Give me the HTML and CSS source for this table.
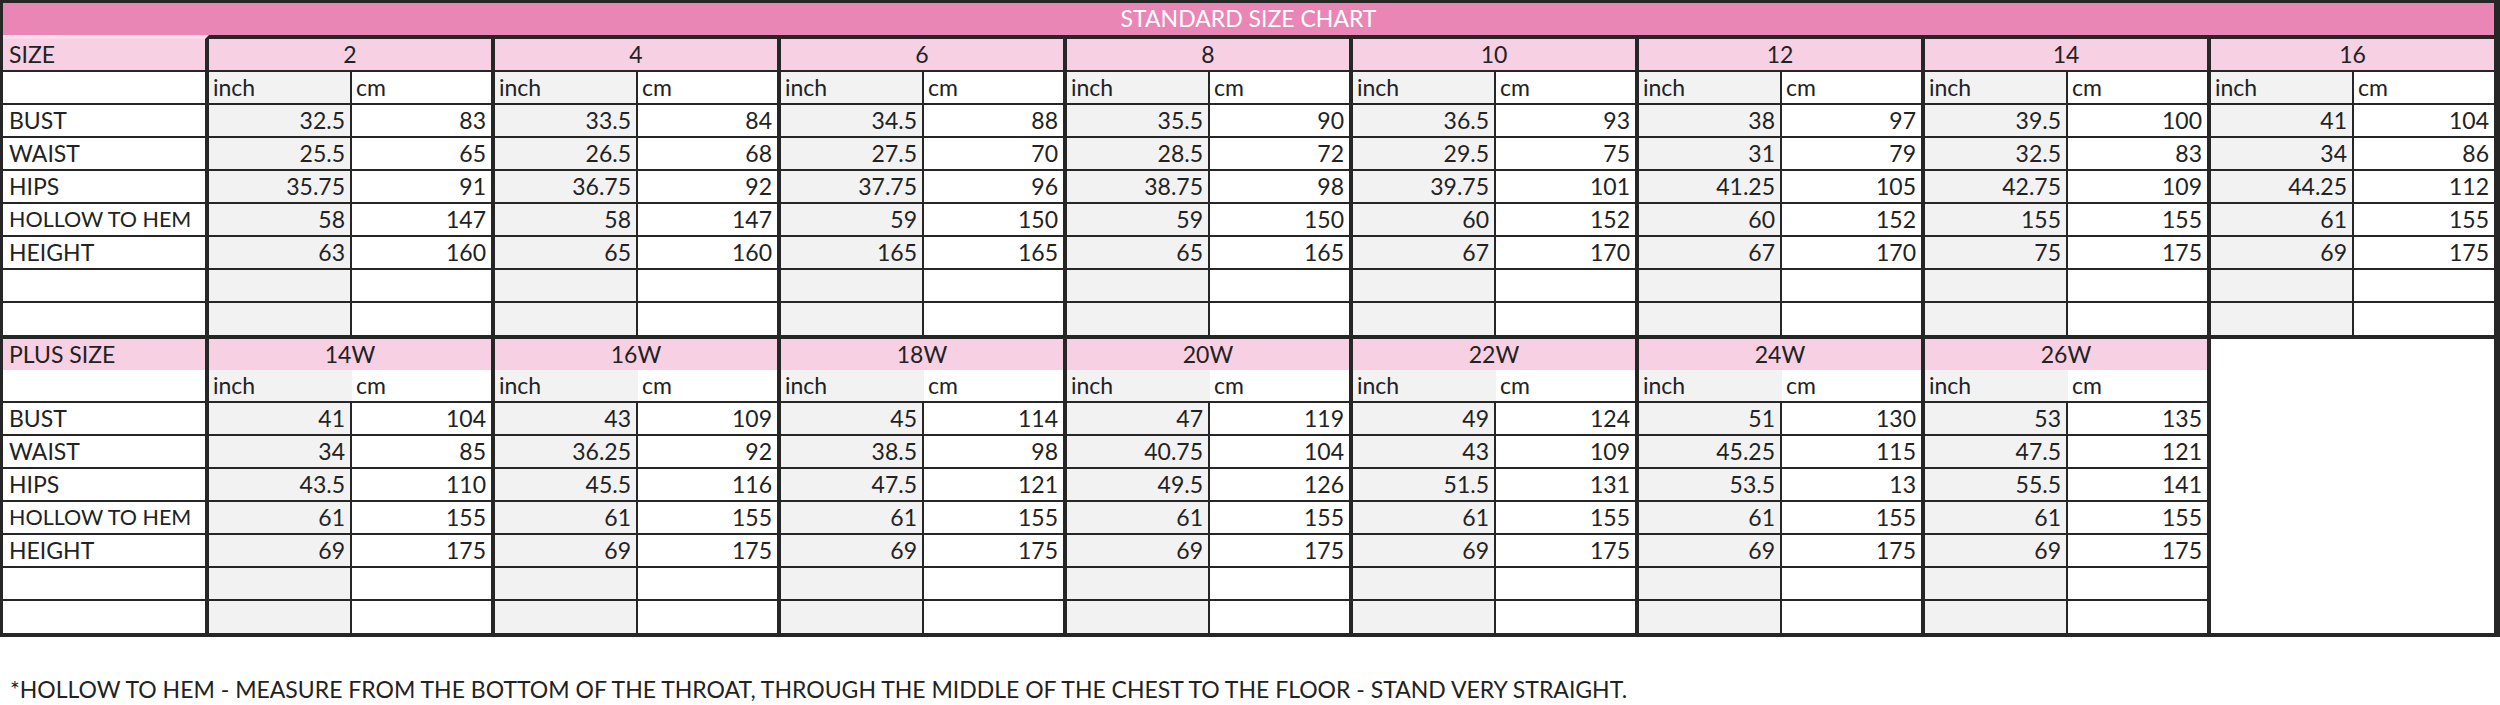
FILE: index.html
```html
<!DOCTYPE html>
<html lang="en">
<head>
<meta charset="utf-8">
<title>Standard Size Chart</title>
<link rel="stylesheet" href="styles.css">
</head>
<body>
<div class="chart">
  <div class="title">STANDARD SIZE CHART</div>
  <div class="grid upper">
    <div class="c lab lh">SIZE</div>
    <div class="c hd">2</div><div class="c hd">4</div><div class="c hd">6</div><div class="c hd">8</div><div class="c hd">10</div><div class="c hd">12</div><div class="c hd">14</div><div class="c hd end">16</div>

    <div class="c lab"></div>
    <div class="c in u">inch</div><div class="c cm u">cm</div>
    <div class="c in u">inch</div><div class="c cm u">cm</div>
    <div class="c in u">inch</div><div class="c cm u">cm</div>
    <div class="c in u">inch</div><div class="c cm u">cm</div>
    <div class="c in u">inch</div><div class="c cm u">cm</div>
    <div class="c in u">inch</div><div class="c cm u">cm</div>
    <div class="c in u">inch</div><div class="c cm u">cm</div>
    <div class="c in u">inch</div><div class="c cm u end">cm</div>

    <div class="c lab">BUST</div>
    <div class="c in">32.5</div><div class="c cm">83</div>
    <div class="c in">33.5</div><div class="c cm">84</div>
    <div class="c in">34.5</div><div class="c cm">88</div>
    <div class="c in">35.5</div><div class="c cm">90</div>
    <div class="c in">36.5</div><div class="c cm">93</div>
    <div class="c in">38</div><div class="c cm">97</div>
    <div class="c in">39.5</div><div class="c cm">100</div>
    <div class="c in">41</div><div class="c cm end">104</div>

    <div class="c lab">WAIST</div>
    <div class="c in">25.5</div><div class="c cm">65</div>
    <div class="c in">26.5</div><div class="c cm">68</div>
    <div class="c in">27.5</div><div class="c cm">70</div>
    <div class="c in">28.5</div><div class="c cm">72</div>
    <div class="c in">29.5</div><div class="c cm">75</div>
    <div class="c in">31</div><div class="c cm">79</div>
    <div class="c in">32.5</div><div class="c cm">83</div>
    <div class="c in">34</div><div class="c cm end">86</div>

    <div class="c lab">HIPS</div>
    <div class="c in">35.75</div><div class="c cm">91</div>
    <div class="c in">36.75</div><div class="c cm">92</div>
    <div class="c in">37.75</div><div class="c cm">96</div>
    <div class="c in">38.75</div><div class="c cm">98</div>
    <div class="c in">39.75</div><div class="c cm">101</div>
    <div class="c in">41.25</div><div class="c cm">105</div>
    <div class="c in">42.75</div><div class="c cm">109</div>
    <div class="c in">44.25</div><div class="c cm end">112</div>

    <div class="c lab small">HOLLOW TO HEM</div>
    <div class="c in">58</div><div class="c cm">147</div>
    <div class="c in">58</div><div class="c cm">147</div>
    <div class="c in">59</div><div class="c cm">150</div>
    <div class="c in">59</div><div class="c cm">150</div>
    <div class="c in">60</div><div class="c cm">152</div>
    <div class="c in">60</div><div class="c cm">152</div>
    <div class="c in">155</div><div class="c cm">155</div>
    <div class="c in">61</div><div class="c cm end">155</div>

    <div class="c lab">HEIGHT</div>
    <div class="c in">63</div><div class="c cm">160</div>
    <div class="c in">65</div><div class="c cm">160</div>
    <div class="c in">165</div><div class="c cm">165</div>
    <div class="c in">65</div><div class="c cm">165</div>
    <div class="c in">67</div><div class="c cm">170</div>
    <div class="c in">67</div><div class="c cm">170</div>
    <div class="c in">75</div><div class="c cm">175</div>
    <div class="c in">69</div><div class="c cm end">175</div>

    <div class="c lab"></div>
    <div class="c in"></div><div class="c cm"></div>
    <div class="c in"></div><div class="c cm"></div>
    <div class="c in"></div><div class="c cm"></div>
    <div class="c in"></div><div class="c cm"></div>
    <div class="c in"></div><div class="c cm"></div>
    <div class="c in"></div><div class="c cm"></div>
    <div class="c in"></div><div class="c cm"></div>
    <div class="c in"></div><div class="c cm end"></div>

    <div class="c lab nb"></div>
    <div class="c in nb"></div><div class="c cm nb"></div>
    <div class="c in nb"></div><div class="c cm nb"></div>
    <div class="c in nb"></div><div class="c cm nb"></div>
    <div class="c in nb"></div><div class="c cm nb"></div>
    <div class="c in nb"></div><div class="c cm nb"></div>
    <div class="c in nb"></div><div class="c cm nb"></div>
    <div class="c in nb"></div><div class="c cm nb"></div>
    <div class="c in nb"></div><div class="c cm nb end"></div>
  </div>

  <div class="grid lower">
    <div class="empty"></div>

    <div class="c lab lh2 nb">PLUS SIZE</div>
    <div class="c hd2 nb">14W</div><div class="c hd2 nb">16W</div><div class="c hd2 nb">18W</div><div class="c hd2 nb">20W</div><div class="c hd2 nb">22W</div><div class="c hd2 nb">24W</div><div class="c hd2 nb">26W</div>

    <div class="c lab"></div>
    <div class="c in u open">inch</div><div class="c cm u">cm</div>
    <div class="c in u open">inch</div><div class="c cm u">cm</div>
    <div class="c in u open">inch</div><div class="c cm u">cm</div>
    <div class="c in u open">inch</div><div class="c cm u">cm</div>
    <div class="c in u open">inch</div><div class="c cm u">cm</div>
    <div class="c in u open">inch</div><div class="c cm u">cm</div>
    <div class="c in u open">inch</div><div class="c cm u">cm</div>

    <div class="c lab">BUST</div>
    <div class="c in">41</div><div class="c cm">104</div>
    <div class="c in">43</div><div class="c cm">109</div>
    <div class="c in">45</div><div class="c cm">114</div>
    <div class="c in">47</div><div class="c cm">119</div>
    <div class="c in">49</div><div class="c cm">124</div>
    <div class="c in">51</div><div class="c cm">130</div>
    <div class="c in">53</div><div class="c cm">135</div>

    <div class="c lab">WAIST</div>
    <div class="c in">34</div><div class="c cm">85</div>
    <div class="c in">36.25</div><div class="c cm">92</div>
    <div class="c in">38.5</div><div class="c cm">98</div>
    <div class="c in">40.75</div><div class="c cm">104</div>
    <div class="c in">43</div><div class="c cm">109</div>
    <div class="c in">45.25</div><div class="c cm">115</div>
    <div class="c in">47.5</div><div class="c cm">121</div>

    <div class="c lab">HIPS</div>
    <div class="c in">43.5</div><div class="c cm">110</div>
    <div class="c in">45.5</div><div class="c cm">116</div>
    <div class="c in">47.5</div><div class="c cm">121</div>
    <div class="c in">49.5</div><div class="c cm">126</div>
    <div class="c in">51.5</div><div class="c cm">131</div>
    <div class="c in">53.5</div><div class="c cm">13</div>
    <div class="c in">55.5</div><div class="c cm">141</div>

    <div class="c lab small">HOLLOW TO HEM</div>
    <div class="c in">61</div><div class="c cm">155</div>
    <div class="c in">61</div><div class="c cm">155</div>
    <div class="c in">61</div><div class="c cm">155</div>
    <div class="c in">61</div><div class="c cm">155</div>
    <div class="c in">61</div><div class="c cm">155</div>
    <div class="c in">61</div><div class="c cm">155</div>
    <div class="c in">61</div><div class="c cm">155</div>

    <div class="c lab">HEIGHT</div>
    <div class="c in">69</div><div class="c cm">175</div>
    <div class="c in">69</div><div class="c cm">175</div>
    <div class="c in">69</div><div class="c cm">175</div>
    <div class="c in">69</div><div class="c cm">175</div>
    <div class="c in">69</div><div class="c cm">175</div>
    <div class="c in">69</div><div class="c cm">175</div>
    <div class="c in">69</div><div class="c cm">175</div>

    <div class="c lab"></div>
    <div class="c in"></div><div class="c cm"></div>
    <div class="c in"></div><div class="c cm"></div>
    <div class="c in"></div><div class="c cm"></div>
    <div class="c in"></div><div class="c cm"></div>
    <div class="c in"></div><div class="c cm"></div>
    <div class="c in"></div><div class="c cm"></div>
    <div class="c in"></div><div class="c cm"></div>

    <div class="c lab nb"></div>
    <div class="c in nb"></div><div class="c cm nb"></div>
    <div class="c in nb"></div><div class="c cm nb"></div>
    <div class="c in nb"></div><div class="c cm nb"></div>
    <div class="c in nb"></div><div class="c cm nb"></div>
    <div class="c in nb"></div><div class="c cm nb"></div>
    <div class="c in nb"></div><div class="c cm nb"></div>
    <div class="c in nb"></div><div class="c cm nb"></div>
  </div>
</div>
<p class="note">*HOLLOW TO HEM - MEASURE FROM THE BOTTOM OF THE THROAT, THROUGH THE MIDDLE OF THE CHEST TO THE FLOOR - STAND VERY STRAIGHT.</p>
</body>
</html>
```
FILE: styles.css
```css
html, body {
  margin: 0;
  padding: 0;
  background: #ffffff;
}

body {
  width: 2500px;
  font-family: Lato, "Liberation Sans", sans-serif;
  color: #222222;
}

.chart {
  width: 2500px;
  box-sizing: border-box;
  border-style: solid;
  border-color: #262626;
  border-width: 3px 6px 4px 3px;
}

.title {
  height: 32px;
  box-sizing: border-box;
  padding-top: 1px;
  background: #e986b5;
  color: #ffffff;
  text-align: center;
  font-size: 23px;
  line-height: 29px;
}

.grid {
  display: grid;
  grid-template-columns: 206px repeat(7, 143px 143px) 143px 140px;
}

.upper {
  grid-template-rows: 37px repeat(7, 33px) 32px;
}

.lower {
  grid-template-rows: 31px repeat(7, 33px) 32px;
  border-top: 4px solid #262626;
}

.c {
  box-sizing: border-box;
  border-bottom: 2px solid #262626;
  padding: 1px 5px 0 5px;
  font-size: 23px;
  line-height: 29px;
  white-space: nowrap;
  overflow: hidden;
}

.lab {
  background: #ffffff;
  border-right: 4px solid #262626;
  padding-left: 6px;
}

.small {
  font-size: 21.5px;
}

.lh {
  background: #f7d0e3;
  border-top: 4px solid #f9dbe9;
}

.lh2 {
  background: #f7d0e3;
}

.hd {
  grid-column: span 2;
  background: #f7d0e3;
  border-top: 4px solid #262626;
  border-right: 4px solid #262626;
  text-align: center;
}

.hd2 {
  grid-column: span 2;
  background: #f7d0e3;
  border-right: 4px solid #262626;
  text-align: center;
}

.in {
  background: #f2f2f2;
  border-right: 2px solid #262626;
  text-align: right;
}

.cm {
  background: #ffffff;
  border-right: 4px solid #262626;
  text-align: right;
}

.u {
  text-align: left;
  padding-left: 4px;
}

.open {
  border-right: 0;
}

.end {
  border-right: 0;
}

.nb {
  border-bottom: 0;
}

.empty {
  grid-column: 16 / span 2;
  grid-row: 1 / span 9;
  background: #ffffff;
}

.note {
  margin: 39px 0 0 0;
  padding-left: 10px;
  font-size: 23px;
  line-height: 27px;
  color: #222222;
}
```
